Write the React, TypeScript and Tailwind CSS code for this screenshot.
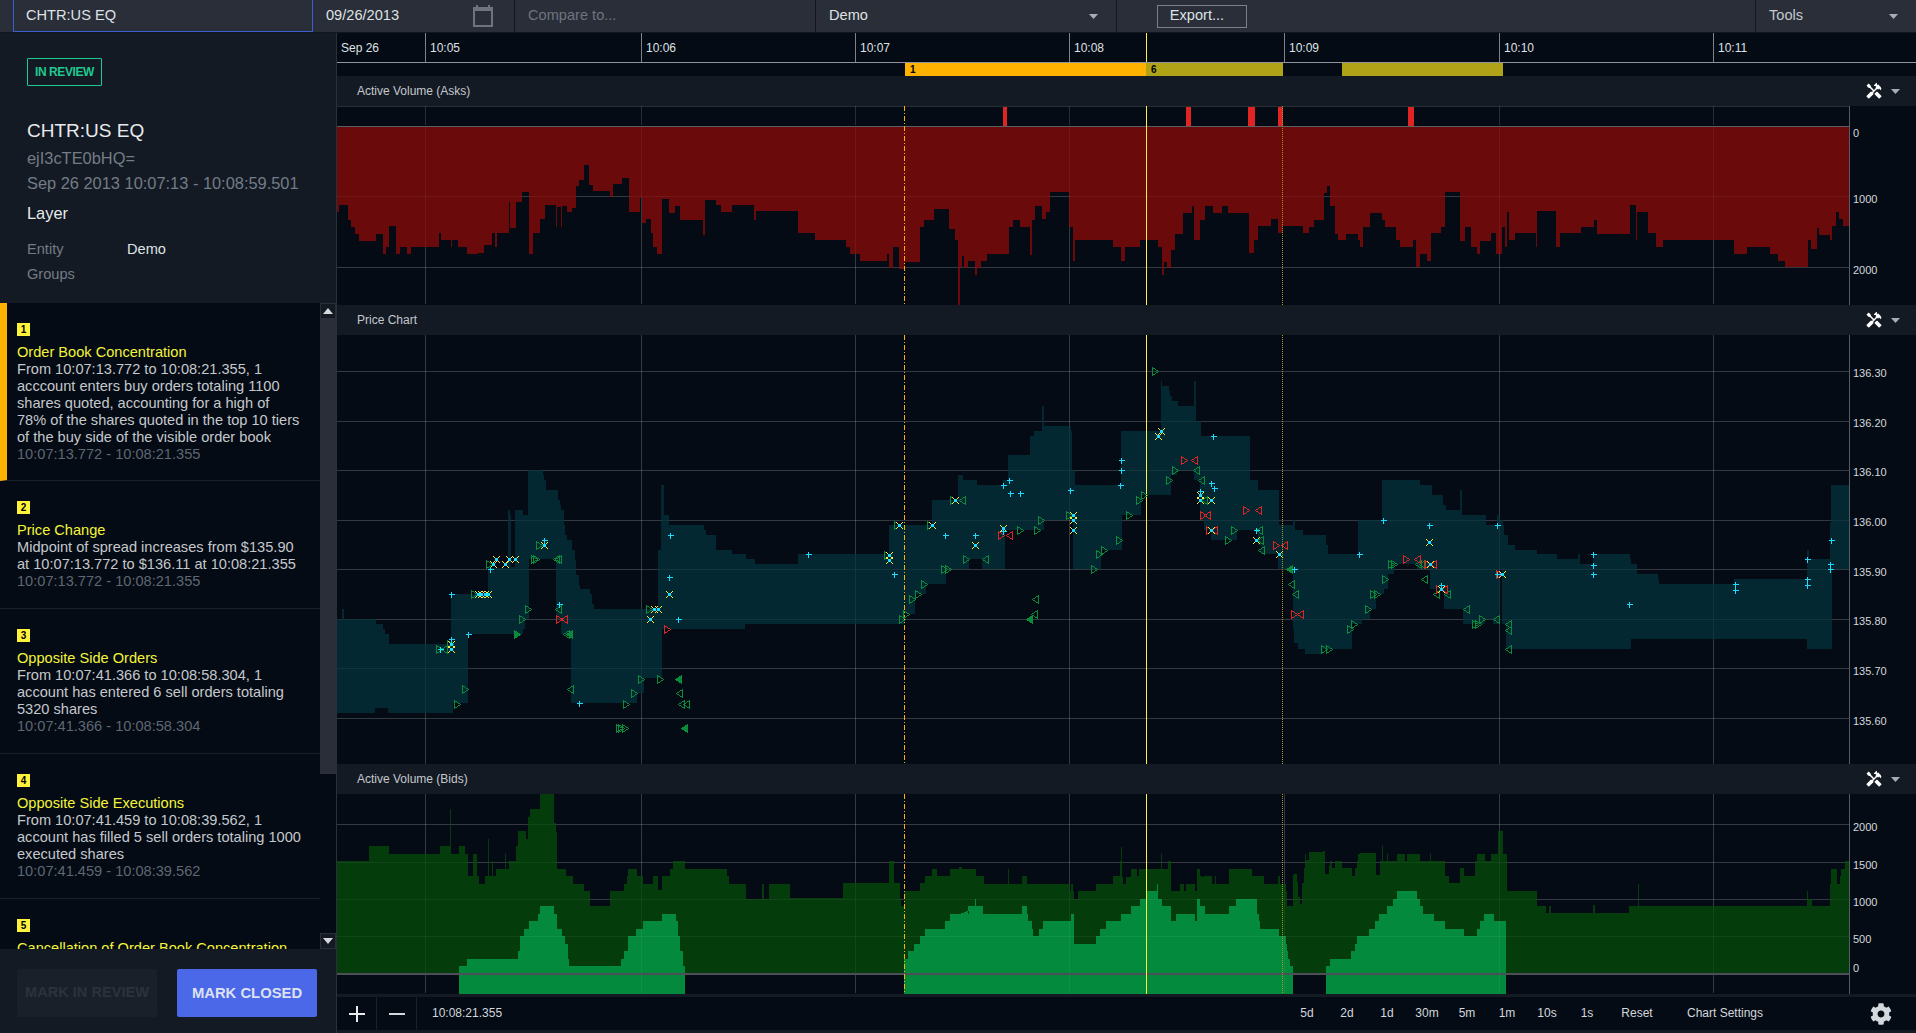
import React from 'react';
import { FaCog } from 'react-icons/fa';
import { MdHandyman } from 'react-icons/md';

type P = [number, number];

// A stepped outline, traced from the chart: X,Y,X,Y,...,Xend
const steps = (ox: number, sx: number, oy: number, a: number[]): P[] => {
  const out: P[] = [];
  for (let i = 0; i + 2 < a.length; i += 2) {
    const x0 = Math.round(ox + a[i] / sx);
    const x1 = Math.round(ox + a[i + 2] / sx);
    const y = Math.round(oy + a[i + 1] / 3);
    out.push([x0, y], [x1, y]);
  }
  return out;
};
const pts = (p: P[]) => p.map((q) => q.join(',')).join(' ');

const ask: P[] = [
  ...steps(0, 2.45, 0, [825,635,830,615,852,660,860,680,870,702,880,722,920,702,938,762,945,740,953,678,970,762,980,741,997,762,1007,741,1075,700,1080,720,1105,740,1108,720,1122,741,1145,762,1170,758,1185,735,1205,700,1212,740,1218,700,1248,605,1250,685,1265,605,1280,575,1295,762,1307,700,1322,658,1335,615,1362,680,1365,620,1375,680,1378,618,1390,635,1402,625,1412,558,1418,540,1430,495,1442,555,1452,573,1495,592,1502,553,1525,535,1540,635,1568]),
  ...steps(640, 2.45, 0, [0,595,5,670,15,658,28,700,32,740,42,762,55,598,70,640,85,618,98,660,155,705,160,600,185,615,198,635,225,615,280,660,285,633,387,700,415,698,428,720,505,740,515,762,540,783,605,762,610,803,620,741,635,806,650,785,686,682,696,660,720,628,758,688,772,720,778,915,783,800,790,768,795,803,803,783,820,825,826,803,835,783,850,762,905,680,915,660,930,682,955,765,960,660,968,618,985,658,995,635,1004,576,1052,680,1060,782,1065,720,1160,741,1178,782,1188,741,1225,720,1270,741,1278,825,1285,785,1292,805,1302,750,1310,702,1330,640,1352,618,1358,720,1372,660,1385,618,1405,640,1425,618,1440,640,1492,760,1505,720,1515,678,1545,658,1562,700,1568]),
  ...steps(1276, 2.45, 0, [10,700,18,678,65,700,82,682,93,660,118,578,125,558,132,618,145,702,152,720,172,702,200,720,205,741,213,680,230,640,260,660,268,682,295,720,304,741,336,720,344,802,353,762,370,782,380,700,405,680,413,576,450,722,463,682,478,741,492,762,500,722,527,700,540,762,553,680,560,741,565,636,571,720,585,700,637,740,640,633,686,741,696,700,747,682,780,660,786,702,868,615,882,720,884,636,912,700,932,741,947,720,1122,762,1154,741,1210,762,1230,783,1247,802,1303,720,1311,747,1325,685,1330,706,1358,720,1363,678,1371,636,1380,658,1388,678,1405]),
];

const bandTop: P[] = [
  [337, 619],
  ...steps(340, 2.8, 460, [0,478,5,448,10,478,100,492,120,507,125,522,137,552,311,402,415,325,470,150,476,165,479,320,490,150,512,165,526,30,568,45,572,60,576,90,610,120,615,135,620,150,626,195,630,225,636,240,650,270,657,300,662,345,668,375,672,387,700,402,705,432,710,447,890,270,900,75,906,165,922,195,1020,210,1025,225,1052,270,1098,282,1137,297,1162,312,1282,282,1537]),
  ...steps(880, 2.8, 340, [25,555,146,480,218,405,232,420,272,435,345,420,358,345,420,288,432,273,454,198,459,258,535,273,538,390,546,435,675,273,787,123,790,138,808,153,812,168,818,183,834,197,880,123,884,243,898,288,1036,420,1058,450,1117,555,1156,541,1162,570,1184,585,1250,615,1254,642,1338,540,1406,420,1456]),
  ...steps(1400, 3, 440, [0,120,60,135,96,165,129,195,138,210,180,150,186,225,258,255,291,225,300,240,309,255,312,285,324,315,345,330,411,342,471,357,534,342,540,372,580,342,690,357,693,372,711,402,774,417,777,432,1002,417,1221,330,1227,357,1290,250,1293,135,1347]),
];
const bandBottom: P[] = [
  [337, 713],
  ...steps(340, 2.8, 460, [0,758,98,743,134,758,315,728,358,522,512,507,518,478,528,298,605,478,620,522,647,728,832,698,850,654,902,507,1134,492,1512]),
  ...steps(880, 2.8, 340, [0,852,70,822,98,762,128,732,185,688,250,657,286,688,350,570,460,541,540,688,618,630,678,525,730,465,815,405,832,390,880,420,895,540,908,570,928,600,1000,570,1058,615,1068,642,1115,688,1156,868,1160,910,1170,926,1190,941,1240,926,1322,852,1350,838,1372,808,1388,762,1410,746,1422,702,1438,672,1456]),
  ...steps(1400, 3, 440, [0,372,50,387,90,447,132,507,189,552,255,537,280,552,318,627,693,597,1221,627,1296,387,1347]),
];

const bidsDark: P[] = [
  ...steps(340, 2.45, 770, [-7,273,71,228,120,252,245,228,270,118,272,252,292,228,306,252,314,318,326,252,336,318,341,342,355,318,363,207,365,318,372,273,375,318,382,297,404,252,406,297,415,273,430,228,437,183,456,207,461,140,465,117,490,72,524,160,528,185,532,297,553,318,570,425,572,342,598,363,612,408,661,363,696,342,704,318,706,297,728,318,742,342,767,318,780,360,790,318,808,297,816,273,845,297,948,318,952,342,995,387,1034,342,1040,387,1052,342,1102,384,1232,340,1345,273,1358,340,1372,385,1375,408,1383,363,1420,340,1434,318,1450,297,1463,318,1494,297,1516,292,1525,297,1556,318,1568]),
  ...steps(960, 3, 790, [0,255,6,237,48,258,72,282,144,237,147,282,186,258,201,282,330,303,334,282,339,303,342,327,354,303,408,282,459,258,480,213,483,171,486,261,489,282,498,261,513,237,531,258,537,237,603,192,606,237,624,213,633,303,660,282,672,303,678,282,705,303,711,237,720,258,726,261,732,258,756,282,765,258,768,282,807,237,876,258,912,282,954,258,960,282,978,303,981,348,999,255,1002,252,1011,276,1014,321,1020,342,1026,279,1032,234,1035,192,1038,210,1047,186,1089,183,1095,252,1107,228,1110,213,1116,234,1125,213,1146,234,1176,258,1185,234,1191,213,1194,192,1200]),
  ...steps(1300, 2.545, 740, [152,340,193,405,203,363,209,318,211,363,221,342,223,363,247,342,268,363,272,342,305,363,331,342,333,363,369,408,378,429,408,385,417,408,445,363,451,342,471,363,486,342,504,273,517,342,527,453,603,498,627,519,634,498,639,519,746,495,750,519,837,498,860,432,864,498,1291,453,1293,477,1303,498,1349,432,1352,387,1367,432,1374,408,1377,387,1387,363,1398]),
];

const bright = (a: P[], endY = 994): P[] => {
  const first = a[0][0];
  const last = a[a.length - 1][0];
  return [[first, endY], ...a, [last, endY]];
};
const bright1 = steps(340, 2.45, 770, [292,588,311,567,436,543,441,498,451,477,463,453,484,432,490,408,524,432,532,477,545,498,552,522,558,567,561,588,688,567,695,543,706,498,725,477,742,453,789,432,824,453,828,498,833,543,840,588,845]);
const bright2 = [
  ...steps(340, 2.45, 770, [1383,567,1392,543,1406,522,1420,498,1433,477,1482,453,1494,432,1540,408,1568]),
  ...steps(960, 3, 790, [0,372,24,348,45,327,48,348,69,372,186,348,201,372,204,393,216,417,219,438,237,417,249,393,333,372,342,462,408,438,420,417,438,393,483,372,513,348,540,327,561,303,591,282,594,327,606,348,633,393,648,372,705,393,711,327,720,348,735,372,807,348,828,327,891,372,897,393,900,417,957,438,978,462,981,483,984,507,990,528,999]),
];
const bright3 = [
  ...steps(960, 3, 790, [1098,528,1110,507,1173,483,1185,462,1191,438,1200]),
  ...steps(1300, 2.545, 740, [152,588,176,567,191,543,201,522,221,498,237,477,247,453,298,477,305,498,313,522,341,543,369,567,417,588,451,567,458,543,468,522,494,543,524]),
];

type Src = { ox: number; sx: number; oy: number; plus: number[]; x: number[]; gr: number[]; gl: number[]; rr: number[]; rl: number[]; grf: number[]; glf: number[] };
const sources: Src[] = [
  {
    ox: 340, sx: 2.8, oy: 460,
    plus: [312,403,357,523,421,328,312,538,279,568,572,241,612,433,925,226,922,352,947,478,668,730,1311,283],
    x: [312,552,312,568,427,313,437,298,462,313,472,298,490,298,572,256,385,403,395,403,405,403,415,403,922,403,869,478,880,448,890,448],
    gr: [278,568,350,686,328,731,525,448,510,478,548,298,542,298,418,313,558,256,375,403,865,448,843,656,895,656,800,731,823,700,780,805,787,805,797,805,308,552],
    gl: [290,568,610,448,605,298,610,298,645,686,950,700,955,731,970,731,632,523],
    rr: [612,478,915,508], rl: [628,478],
    grf: [495,523], glf: [642,523,947,656,962,805],
  },
  {
    ox: 880, sx: 2.8, oy: 340,
    plus: [40,703,183,586,267,586,343,436,360,421,363,460,393,460,345,572,533,451,676,361,676,391,673,436,933,289,928,430,934,445,895,452,1053,571,1158,688,1340,643,1407,541],
    x: [53,556,146,556,26,645,26,660,210,481,266,616,345,563,541,526,541,541,541,571,787,274,777,289,895,466,895,481,928,481,928,571,1053,601,1117,643],
    gr: [47,556,140,556,20,645,178,688,190,688,122,733,105,763,90,778,73,823,62,838,240,658,205,481,450,541,392,571,440,571,530,526,600,688,612,643,628,631,670,601,698,526,724,481,740,466,770,94,825,391,808,421,992,571,973,601,1380,763,1392,763,1365,808,1328,853,1315,868,1243,928,1257,928,1415,718,1432,673,1440,673],
    gl: [230,481,293,658,433,778,430,823,885,391,900,421,906,481,1062,571,1065,601,1068,631,1152,733,1163,763],
    rr: [340,586,852,361,1025,511,1108,616,903,526,922,571,1160,823],
    rl: [362,586,878,361,1057,511,1132,616,915,526,935,571,1175,823],
    grf: [], glf: [418,838,1145,688],
  },
  {
    ox: 1400, sx: 3, oy: 440,
    plus: [88,256,292,256,580,343,580,375,580,403,688,493,1004,432,1004,450,1222,358,1222,418,1222,434,1291,372,1291,388,1294,301,292,403,124,435],
    x: [88,307,91,373,124,447,307,403],
    gr: [225,553,233,553,247,538],
    gl: [55,373,65,373,73,418,107,463,140,463,197,508,287,538,325,553,325,570,325,628],
    rr: [18,358,82,373,118,447,298,403], rl: [50,358,100,373,132,447],
    grf: [], glf: [],
  },
];

const each = (a: number[], s: Src, f: (x: number, y: number, k: number) => React.ReactNode) => {
  const out: React.ReactNode[] = [];
  for (let i = 0; i < a.length; i += 2) {
    out.push(f(Math.round(s.ox + a[i] / s.sx) + 0.5, Math.round(s.oy + a[i + 1] / 3) + 0.5, i));
  }
  return out;
};
const tri = (x: number, y: number, dir: number) => `${x - 3 * dir},${y - 4} ${x + 3 * dir},${y} ${x - 3 * dir},${y + 4}`;

const Markers = () => (
  <g>
    {sources.map((s, i) => (
      <g key={i}>
        {each(s.gr, s, (x, y, k) => <polygon key={k} points={tri(x, y, 1)} fill="none" stroke="#0a8a3a" />)}
        {each(s.gl, s, (x, y, k) => <polygon key={k} points={tri(x, y, -1)} fill="none" stroke="#0a8a3a" />)}
        {each(s.grf, s, (x, y, k) => <polygon key={k} points={tri(x, y, 1)} fill="#0a8a3a" stroke="#0a8a3a" />)}
        {each(s.glf, s, (x, y, k) => <polygon key={k} points={tri(x, y, -1)} fill="#0a8a3a" stroke="#0a8a3a" />)}
        {each(s.rr, s, (x, y, k) => <polygon key={k} points={tri(x, y, 1)} fill="none" stroke="#e02424" />)}
        {each(s.rl, s, (x, y, k) => <polygon key={k} points={tri(x, y, -1)} fill="none" stroke="#e02424" />)}
        {each(s.x, s, (x, y, k) => (
          <g key={k}>
            <path d={`M${x - 3.5} ${y - 3.5}L${x + 3.5} ${y + 3.5}M${x + 3.5} ${y - 3.5}L${x - 3.5} ${y + 3.5}`} stroke="#fff23a" fill="none" />
            <rect x={x - 1.5} y={y - 1.5} width={3} height={3} fill="#1fdcff" />
          </g>
        ))}
        {each(s.plus, s, (x, y, k) => (
          <path key={k} d={`M${x - 3} ${y}H${x + 3}M${x} ${y - 3}V${y + 3}`} stroke="#1fdcff" fill="none" />
        ))}
      </g>
    ))}
  </g>
);

const TICKS = [425, 641, 855, 1069, 1284, 1499, 1713];
const UNDER = 'rgba(255,255,255,0.14)';
const OVER = 'rgba(255,255,255,0.06)';

const VGrid = ({ y1, y2, c, skip }: { y1: number; y2: number; c: string; skip?: number }) => (
  <g>
    {TICKS.filter((x) => x !== skip).map((x) => (
      <line key={x} x1={x + 0.5} x2={x + 0.5} y1={y1} y2={y2} stroke={c} />
    ))}
  </g>
);
const HGrid = ({ ys, c }: { ys: number[]; c: string }) => (
  <g>
    {ys.map((y) => (
      <line key={y} x1={337} x2={1849} y1={y + 0.5} y2={y + 0.5} stroke={c} />
    ))}
  </g>
);
const Cursors = ({ y1, y2 }: { y1: number; y2: number }) => (
  <g>
    <line x1={904.5} x2={904.5} y1={y1} y2={y2} stroke="#ffb300" strokeDasharray="5 2 1 2" />
    <line x1={1146.5} x2={1146.5} y1={y1} y2={y2} stroke="#fff23a" />
    <line x1={1282.5} x2={1282.5} y1={y1} y2={y2} stroke="#a89a18" strokeDasharray="1 1" />
    <line x1={1849.5} x2={1849.5} y1={y1} y2={y2} stroke="#565c66" />
  </g>
);
const Labels = ({ items }: { items: [string, number][] }) => (
  <g>
    {items.map(([t, y]) => (
      <text key={t} x={1853} y={y + 4} fontSize={11} fill="#d4d8dc">{t}</text>
    ))}
  </g>
);

const AskChart = () => (
  <svg viewBox="337 106 1579 199" width={1579} height={199} className="block bg-[#040b14]" shapeRendering="crispEdges">
    <HGrid ys={[106, 196, 267]} c={UNDER} />
    <VGrid y1={106} y2={125} c={UNDER} skip={1284} />
    <VGrid y1={127} y2={304} c={UNDER} skip={1284} />
    <polygon points={pts([[337, 127], ...ask, [1849, 127]])} fill="#6a0a0b" />
    <HGrid ys={[196, 267]} c={OVER} />
    <VGrid y1={127} y2={304} c={OVER} skip={1284} />
    {[[1003, 4], [1186, 5], [1248, 7], [1278, 5], [1408, 6]].map(([x, w]) => (
      <rect key={x} x={x} y={107} width={w} height={19} fill="#e02424" />
    ))}
    <line x1={337} x2={1849} y1={126.5} y2={126.5} stroke="#5a5f66" />
    <Cursors y1={106} y2={305} />
    <Labels items={[['0', 133], ['1000', 199], ['2000', 270]]} />
  </svg>
);

const PRICE_Y = [371, 421, 470, 520, 569, 619, 668, 718];
const PriceChart = () => (
  <svg viewBox="337 335 1579 429" width={1579} height={429} className="block bg-[#040b14]" shapeRendering="crispEdges">
    <HGrid ys={PRICE_Y} c={UNDER} />
    <VGrid y1={335} y2={764} c={UNDER} skip={1284} />
    <polygon points={pts([...bandTop, ...[...bandBottom].reverse()])} fill="#032831" />
    <rect x={1500} y={570} width={2} height={54} fill="#040b14" />
    <HGrid ys={PRICE_Y} c={OVER} />
    <VGrid y1={335} y2={764} c={OVER} skip={1284} />
    <Cursors y1={335} y2={764} />
    <Markers />
    <Labels items={[['136.30', 373], ['136.20', 423], ['136.10', 472], ['136.00', 522], ['135.90', 572], ['135.80', 621], ['135.70', 671], ['135.60', 721]]} />
  </svg>
);

const BIDS_Y = [824, 862, 899, 936];
const BidsChart = () => (
  <svg viewBox="337 794 1579 200" width={1579} height={200} className="block bg-[#040b14]" shapeRendering="crispEdges">
    <HGrid ys={BIDS_Y} c={UNDER} />
    <VGrid y1={794} y2={993} c={UNDER} />
    <polygon points={pts([[337, 974], ...bidsDark, [1849, 974]])} fill="#043c0b" />
    <polygon points={pts(bright(bright1))} fill="#038a3c" />
    <polygon points={pts(bright(bright2))} fill="#038a3c" />
    <polygon points={pts(bright(bright3))} fill="#038a3c" />
    <HGrid ys={BIDS_Y} c={OVER} />
    <VGrid y1={794} y2={993} c={OVER} />
    <rect x={337} y={973} width={1512} height={2} fill="#4c4f57" />
    <Cursors y1={794} y2={994} />
    <Labels items={[['2000', 827], ['1500', 865], ['1000', 902], ['500', 939], ['0', 968]]} />
  </svg>
);

const Caret = ({ className = '' }: { className?: string }) => (
  <svg width="9" height="5" viewBox="0 0 9 5" className={className}>
    <path d="M0 0H9L4.5 5Z" fill="#a8adb3" />
  </svg>
);

const PanelHeader = ({ title }: { title: string }) => (
  <div className="flex h-[30px] items-center bg-[#131a23] pl-5 pr-4 text-[12px] text-[#c4c8cd]">
    <span>{title}</span>
    <MdHandyman className="ml-auto text-white" size={18} />
    <Caret className="ml-[8px]" />
  </div>
);

const events = [
  { n: 1, title: 'Order Book Concentration', body: 'From 10:07:13.772 to 10:08:21.355, 1\nacccount enters buy orders totaling 1100\nshares quoted, accounting for a high of\n78% of the shares quoted in the top 10 tiers\nof the buy side of the visible order book', time: '10:07:13.772 - 10:08:21.355' },
  { n: 2, title: 'Price Change', body: 'Midpoint of spread increases from $135.90\nat 10:07:13.772 to $136.11 at 10:08:21.355', time: '10:07:13.772 - 10:08:21.355' },
  { n: 3, title: 'Opposite Side Orders', body: 'From 10:07:41.366 to 10:08:58.304, 1\naccount has entered 6 sell orders totaling\n5320 shares', time: '10:07:41.366 - 10:08:58.304' },
  { n: 4, title: 'Opposite Side Executions', body: 'From 10:07:41.459 to 10:08:39.562, 1\naccount has filled 5 sell orders totaling 1000\nexecuted shares', time: '10:07:41.459 - 10:08:39.562' },
  { n: 5, title: 'Cancellation of Order Book Concentration', body: '', time: '' },
];

const Sidebar = () => (
  <aside className="flex h-full w-[337px] shrink-0 flex-col border-r border-[#2a2f38] bg-[#131a23]">
    <div className="flex h-[270px] shrink-0 flex-col px-[27px] pt-[25px]">
      <div className="flex h-[28px] w-[75px] items-center justify-center rounded-[1px] border border-[#1fc98f] text-[12px] font-bold tracking-[-0.4px] text-[#1fc98f]">IN REVIEW</div>
      <div className="mt-[33px] text-[19px] leading-[24px] text-[#e8eaec]">CHTR:US EQ</div>
      <div className="mt-[3px] text-[16.4px] leading-[24px] text-[#747c87]">ejI3cTE0bHQ=</div>
      <div className="mt-px whitespace-nowrap text-[16.4px] leading-[24px] text-[#747c87]">Sep 26 2013 10:07:13 - 10:08:59.501</div>
      <div className="mt-[6px] text-[16.4px] leading-[24px] text-[#e8eaec]">Layer</div>
      <div className="mt-[13px] flex text-[14.6px] leading-[22px]">
        <span className="w-[100px] text-[#747c87]">Entity</span>
        <span className="text-[#dfe2e5]">Demo</span>
      </div>
      <div className="mt-[3px] text-[14.6px] leading-[22px] text-[#747c87]">Groups</div>
    </div>
    <div className="flex min-h-0 flex-1 bg-[#040b14]">
      <div className="min-w-0 flex-1 overflow-hidden">
        {events.map((e) => (
          <div key={e.n} className={`border-b border-[#1a2029] pt-5 pr-[5px] text-[14.6px] leading-[17px] ${e.n === 1 ? 'border-l-[7px] border-l-[#ffb300] pb-[17px] pl-[10px]' : 'pb-[18px] pl-[17px]'}`}>
            <div className="flex h-[13px] w-[13px] items-center justify-center bg-[#fff23a] text-[10px] font-bold leading-none text-black">{e.n}</div>
            <div className="mt-[8px] text-[#f4f43a]">{e.title}</div>
            <div className="whitespace-pre text-[#c4c8cc]">{e.body}</div>
            <div className="text-[#5f6773]">{e.time}</div>
          </div>
        ))}
      </div>
      <div className="flex w-[16px] shrink-0 flex-col">
        <div className="flex h-[16px] items-center justify-center border border-[#2a2e38] bg-[#141a22]">
          <svg width="10" height="6" viewBox="0 0 10 6"><path d="M0 6H10L5 0Z" fill="#d5d8dc" /></svg>
        </div>
        <div className="h-[455px] bg-[#2a2e38]" />
        <div className="flex-1" />
        <div className="flex h-[16px] items-center justify-center border border-[#2a2e38] bg-[#141a22]">
          <svg width="10" height="6" viewBox="0 0 10 6"><path d="M0 0H10L5 6Z" fill="#d5d8dc" /></svg>
        </div>
      </div>
    </div>
    <div className="flex h-[84px] shrink-0 gap-5 px-[17px] pt-5">
      <button className="h-[48px] w-[140px] rounded-[2px] bg-[#1a2029] text-[14.6px] font-bold text-[#2b323c]">MARK IN REVIEW</button>
      <button className="h-[48px] w-[140px] rounded-[2px] bg-[#4a68e8] text-[14.8px] font-bold text-[#dde1f2]">MARK CLOSED</button>
    </div>
  </aside>
);

const TopBar = () => (
  <div className="flex h-[32px] shrink-0 bg-[#2a2e38] text-[14.6px]">
    <div className="ml-[13px] flex h-[32px] w-[300px] items-center border-x border-b border-[#3d5ed1] pl-[12px] text-[#dfe2e5]">CHTR:US EQ</div>
    <div className="flex w-[202px] items-center border-r border-[#12161d] pl-[13px] pr-[21px] text-[#dfe2e5]">
      <span>09/26/2013</span>
      <svg width="20" height="22" viewBox="0 0 20 22" className="ml-auto">
        <path d="M4 0V4M16 0V4" stroke="#6d7480" strokeWidth="2" />
        <path d="M1 3H19V21H1Z" fill="none" stroke="#6d7480" strokeWidth="2" />
        <path d="M1 3H19V6H1Z" fill="#6d7480" />
      </svg>
    </div>
    <div className="flex w-[301px] items-center border-r border-[#12161d] pl-[13px] text-[#6e7480]">Compare to...</div>
    <div className="flex w-[301px] items-center border-r border-[#12161d] pl-[13px] pr-[18px] text-[#dfe2e5]">
      <span>Demo</span>
      <Caret className="ml-auto" />
    </div>
    <div className="flex w-[639px] items-center border-r border-[#12161d] pl-[40px]">
      <div className="flex h-[23px] w-[90px] items-center justify-center border border-[#7b8088] pr-[10px] pb-px text-[#dfe2e5]">Export...</div>
    </div>
    <div className="flex flex-1 items-center pl-[13px] pr-[18px] text-[#c4c8cd]">
      <span>Tools</span>
      <Caret className="ml-auto" />
    </div>
  </div>
);

const Timeline = () => (
  <div className="relative flex h-[30px] shrink-0 border-b border-[#8f949c] bg-[#040b14] text-[12px] text-[#dfe2e5]">
    <div className="flex w-[88px] items-center pl-1">Sep 26</div>
    {[['10:05', 216], ['10:06', 214], ['10:07', 214], ['10:08', 215], ['10:09', 215], ['10:10', 214], ['10:11', 203]].map(([t, w]) => (
      <div key={t} className="flex items-center border-l border-[#7d828b] pl-1" style={{ width: Number(w) }}>{t}</div>
    ))}
    <div className="absolute top-0 bottom-0 left-[809px] w-px bg-[#fff23a]" />
  </div>
);

const EventStrip = () => (
  <div className="flex h-[13px] shrink-0 bg-[#040b14] text-[10px] leading-[13px] text-black">
    <div className="w-[568px]" />
    <div className="w-[241px] bg-[#ffb300] pl-[5px] font-bold">1</div>
    <div className="w-[137px] bg-[#b0a317] pl-[5px] font-bold">6</div>
    <div className="w-[59px]" />
    <div className="w-[161px] bg-[#b0a317]" />
  </div>
);

const BottomBar = () => (
  <div className="mt-[3px] flex h-[33px] items-center bg-[#040b14] text-[12px] text-[#d4d8dc]">
    <div className="flex h-full w-[40px] items-center justify-center border-r border-[#1a2029]">
      <svg width="16" height="16" viewBox="0 0 16 16"><path d="M0 8H16M8 0V16" stroke="#e8eaec" strokeWidth="2" /></svg>
    </div>
    <div className="flex h-full w-[40px] items-center justify-center border-r border-[#1a2029]">
      <svg width="16" height="16" viewBox="0 0 16 16"><path d="M0 8H16" stroke="#d4d8dc" strokeWidth="2" /></svg>
    </div>
    <span className="pb-px pl-[15px]">10:08:21.355</span>
    <div className="flex-1" />
    {['5d', '2d', '1d', '30m', '5m', '1m', '10s', '1s'].map((t) => (
      <span key={t} className="w-[40px] pb-px text-center">{t}</span>
    ))}
    <span className="w-[60px] pb-px text-center">Reset</span>
    <span className="w-[116px] pb-px text-center">Chart Settings</span>
    <div className="flex w-[133px] justify-end pr-[24px]">
      <FaCog size={22} className="text-[#d4d8dc]" />
    </div>
  </div>
);

export default function App() {
  return (
    <div className="flex h-[1033px] w-[1916px] flex-col overflow-hidden bg-[#12161d] font-[Liberation_Sans,sans-serif]">
      <TopBar />
      <div className="mt-px flex min-h-0 flex-1">
        <Sidebar />
        <main className="flex w-[1579px] flex-col bg-[#131a23]">
          <Timeline />
          <EventStrip />
          <PanelHeader title="Active Volume (Asks)" />
          <AskChart />
          <PanelHeader title="Price Chart" />
          <PriceChart />
          <PanelHeader title="Active Volume (Bids)" />
          <BidsChart />
          <BottomBar />
        </main>
      </div>
    </div>
  );
}
